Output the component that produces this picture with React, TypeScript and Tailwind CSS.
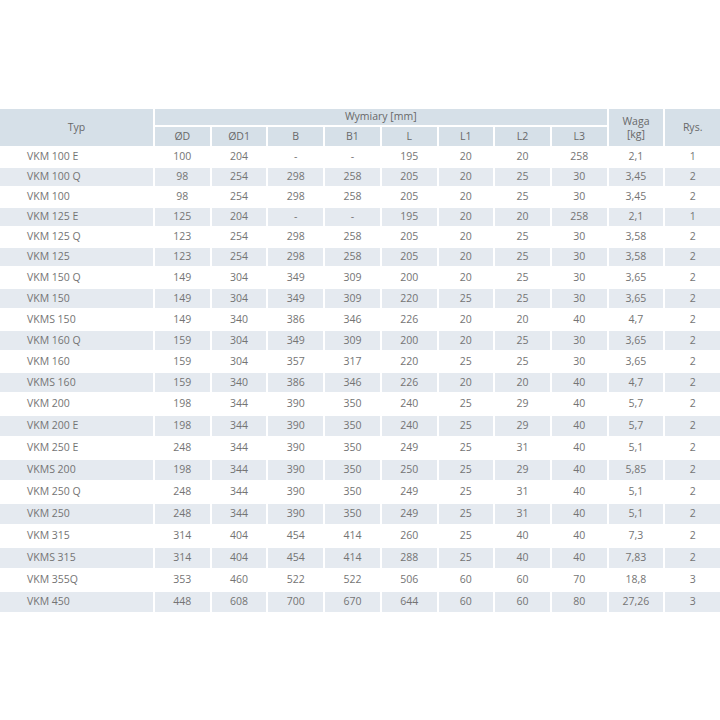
import React from 'react';

const rows: string[][] = [
  ["VKM 100 E", "100", "204", "-", "-", "195", "20", "20", "258", "2,1", "1"],
  ["VKM 100 Q", "98", "254", "298", "258", "205", "20", "25", "30", "3,45", "2"],
  ["VKM 100", "98", "254", "298", "258", "205", "20", "25", "30", "3,45", "2"],
  ["VKM 125 E", "125", "204", "-", "-", "195", "20", "20", "258", "2,1", "1"],
  ["VKM 125 Q", "123", "254", "298", "258", "205", "20", "25", "30", "3,58", "2"],
  ["VKM 125", "123", "254", "298", "258", "205", "20", "25", "30", "3,58", "2"],
  ["VKM 150 Q", "149", "304", "349", "309", "200", "20", "25", "30", "3,65", "2"],
  ["VKM 150", "149", "304", "349", "309", "220", "25", "25", "30", "3,65", "2"],
  ["VKMS 150", "149", "340", "386", "346", "226", "20", "20", "40", "4,7", "2"],
  ["VKM 160 Q", "159", "304", "349", "309", "200", "20", "25", "30", "3,65", "2"],
  ["VKM 160", "159", "304", "357", "317", "220", "25", "25", "30", "3,65", "2"],
  ["VKMS 160", "159", "340", "386", "346", "226", "20", "20", "40", "4,7", "2"],
  ["VKM 200", "198", "344", "390", "350", "240", "25", "29", "40", "5,7", "2"],
  ["VKM 200 E", "198", "344", "390", "350", "240", "25", "29", "40", "5,7", "2"],
  ["VKM 250 E", "248", "344", "390", "350", "249", "25", "31", "40", "5,1", "2"],
  ["VKMS 200", "198", "344", "390", "350", "250", "25", "29", "40", "5,85", "2"],
  ["VKM 250 Q", "248", "344", "390", "350", "249", "25", "31", "40", "5,1", "2"],
  ["VKM 250", "248", "344", "390", "350", "249", "25", "31", "40", "5,1", "2"],
  ["VKM 315", "314", "404", "454", "414", "260", "25", "40", "40", "7,3", "2"],
  ["VKMS 315", "314", "404", "454", "414", "288", "25", "40", "40", "7,83", "2"],
  ["VKM 355Q", "353", "460", "522", "522", "506", "60", "60", "70", "18,8", "3"],
  ["VKM 450", "448", "608", "700", "670", "644", "60", "60", "80", "27,26", "3"],
];

const dims = ["ØD", "ØD1", "B", "B1", "L", "L1", "L2", "L3"];

// row heights drift a little down the page (scaled source)
const rowHeight = (i: number) => (i < 6 ? "h-[18px]" : i < 12 ? "h-[19px]" : "h-[20px]");

export default function App() {
  return (
    <div className="w-[720px] h-[720px] bg-white pt-[109px] text-[#747474] text-[10.5px] font-['Open_Sans',sans-serif]">
      <div className="grid grid-cols-[153px_repeat(10,1fr)] gap-x-[2px] gap-y-[2px]">
        <div className="row-span-2 bg-[#d6e0e8] flex items-center justify-center text-[#686868]">Typ</div>
        <div className="col-span-8 h-[16px] bg-[#d6e0e8] flex items-center justify-center text-[#686868]">Wymiary [mm]</div>
        <div className="row-span-2 bg-[#d6e0e8] flex flex-col items-center justify-center leading-[13px] text-[#686868]">
          <span>Waga</span>
          <span>[kg]</span>
        </div>
        <div className="row-span-2 bg-[#d6e0e8] flex items-center justify-center text-[#686868]">Rys.</div>
        {dims.map((d) => (
          <div key={d} className="h-[19px] bg-[#d6e0e8] flex items-center justify-center text-[#686868]">{d}</div>
        ))}
        {rows.map((row, i) =>
          row.map((cell, j) => (
            <div
              key={i + "-" + j}
              className={`${rowHeight(i)} flex items-center ${j === 0 ? "pl-[27px]" : "justify-center"} ${i % 2 === 1 ? "bg-[#e5eaf0]" : "bg-white"}`}
            >
              {cell}
            </div>
          ))
        )}
      </div>
    </div>
  );
}
